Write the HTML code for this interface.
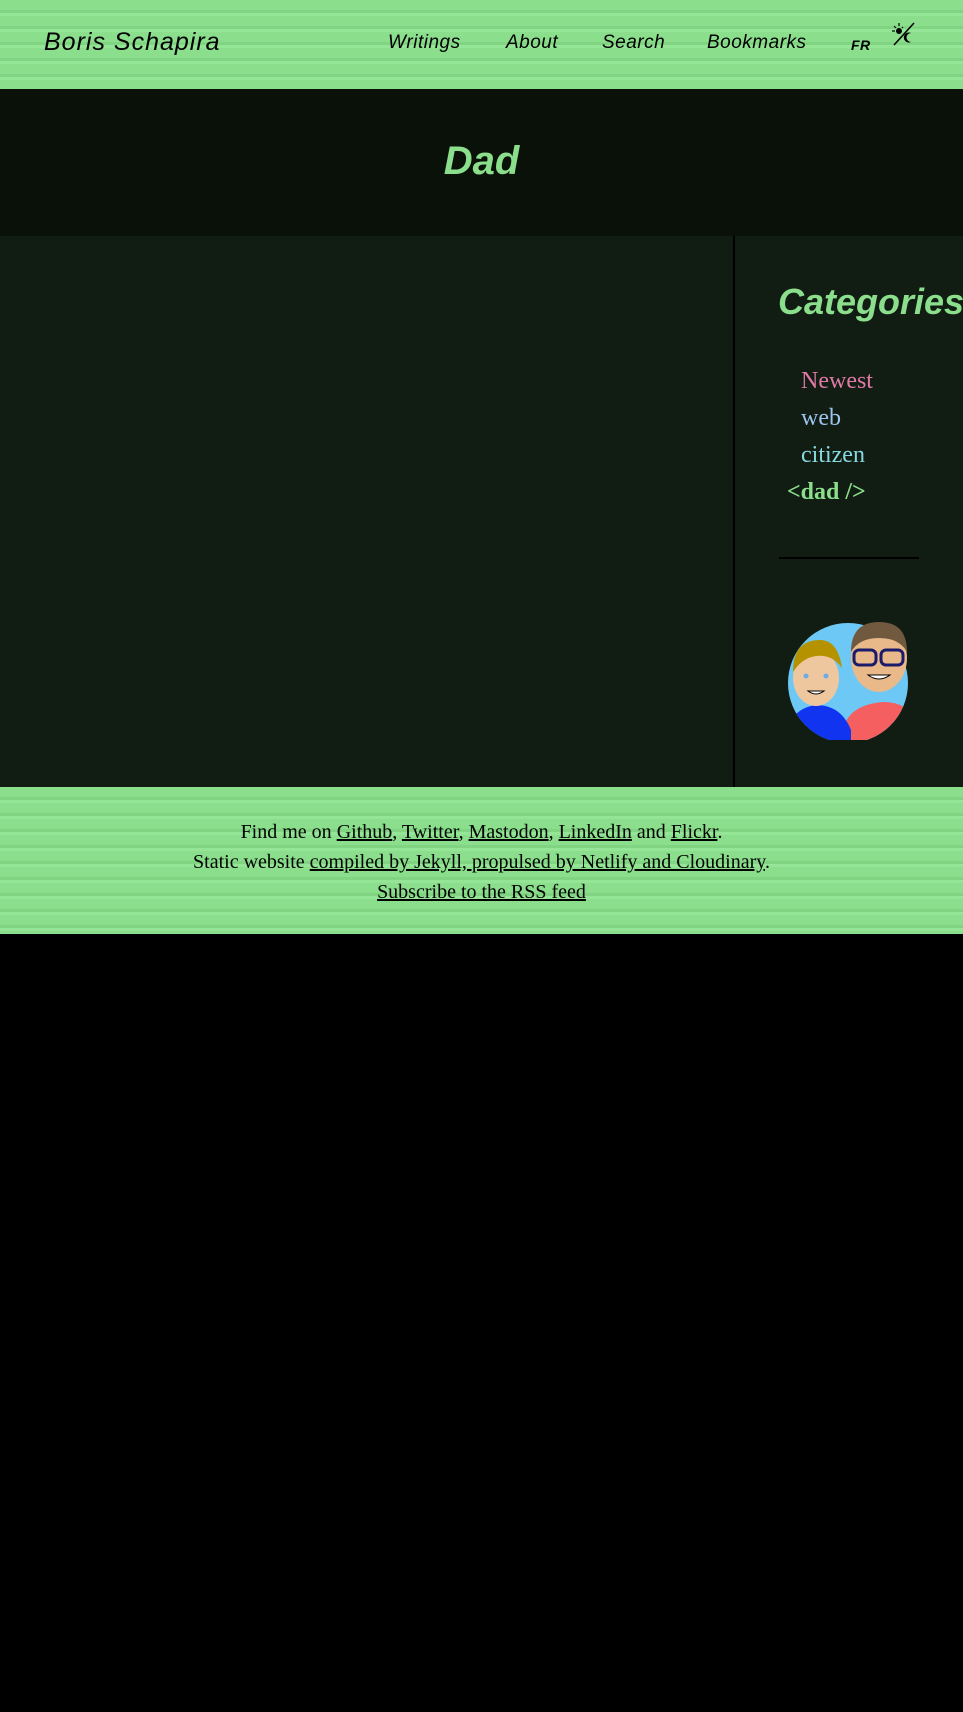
<!DOCTYPE html>
<html><head><meta charset="utf-8"><style>
*{margin:0;padding:0;box-sizing:border-box}
html,body{width:963px;height:1712px;background:#000;overflow:hidden}
body{font-family:"Liberation Serif",serif}
.pat{background-color:#8ade8c;background-image:repeating-linear-gradient(180deg,#8ade8c 0 10px,#80d482 10px 13px,#94e696 13px 16px)}
header{height:89px;position:relative;color:#000;font-family:"Liberation Sans",sans-serif;font-style:italic}
header .logo{position:absolute;left:44px;top:28px;font-size:25px;letter-spacing:1px}
header nav a{position:absolute;top:32px;font-size:19px;letter-spacing:.5px}
.hero{background:#0a1109;height:147px;text-align:center}
.hero h1{color:#8ade8c;font-family:"Liberation Sans",sans-serif;font-style:italic;font-weight:bold;font-size:40px;position:absolute;left:0;width:963px;line-height:46px;top:138px}
.main{background:#111c12;height:551px;position:relative}
.main .div{position:absolute;left:733px;top:0;width:2px;height:551px;background:#000}
.cat{position:absolute;left:778px;top:45px;color:#8ade8c;font-family:"Liberation Sans",sans-serif;font-style:italic;font-weight:bold;font-size:36px;white-space:nowrap}
.li{position:absolute;font-size:24px}
.hr{position:absolute;left:779px;top:321px;width:140px;height:2px;background:#000}
footer{height:147px;text-align:center;font-size:20px;line-height:30px;padding-top:30px;color:#000}
footer a{color:#000;text-decoration:underline}
</style></head><body>
<header class="pat">
<div class="logo">Boris Schapira</div>
<nav><a style="left:388px">Writings</a><a style="left:506px">About</a><a style="left:602px">Search</a><a style="left:707px">Bookmarks</a><a style="left:851px;top:37px;font-size:14px;font-weight:bold">FR</a></nav>
<svg style="position:absolute;left:890px;top:21px" width="26" height="26" viewBox="0 0 26 26"><line x1="4" y1="24" x2="24" y2="2" stroke="#000" stroke-width="1.5"/><circle cx="9" cy="10" r="3" fill="#000"/><g stroke="#000" stroke-width="1.2"><line x1="9" y1="2" x2="9" y2="5"/><line x1="2" y1="10" x2="5" y2="10"/><line x1="4" y1="5" x2="6" y2="7"/><line x1="13" y1="6" x2="12" y2="7"/></g><path d="M21 12a5 5 0 1 0 0 9a4 4 0 0 1 0-9z" fill="#000"/></svg>
</header>
<div class="hero"><h1>Dad</h1></div>
<div class="main">
<div class="div"></div>
<div class="cat">Categories</div>
<div class="li" style="left:801px;top:132px;color:#e07aa8">Newest</div>
<div class="li" style="left:801px;top:169px;color:#9ec5ee">web</div>
<div class="li" style="left:801px;top:206px;color:#86d9e0">citizen</div>
<div class="li" style="left:787px;top:243px;color:#8ade8c;font-weight:bold">&lt;dad /&gt;</div>
<div class="hr"></div>
<svg style="position:absolute;left:788px;top:384px" width="120" height="120" viewBox="0 0 120 120">
<defs><clipPath id="c"><circle cx="60" cy="63" r="60"/></clipPath></defs>
<circle cx="60" cy="63" r="60" fill="#6dc8f5"/>
<g clip-path="url(#c)">
<path d="M55 110 q5-25 40-28 q30 0 35 28 v20 h-75z" fill="#f55f5f"/>
<path d="M0 110 q5-22 28-25 q25 0 35 25 v20 h-63z" fill="#1034f0"/>
</g>
<ellipse cx="91" cy="38" rx="28" ry="34" fill="#e9b98a"/>
<path d="M63 32 q0-30 28-30 q28 0 28 30 q-8-14-28-14 q-20 0-28 14z" fill="#71593f"/>
<rect x="66" y="30" width="22" height="15" rx="5" fill="none" stroke="#1b1b6b" stroke-width="3"/>
<rect x="93" y="30" width="22" height="15" rx="5" fill="none" stroke="#1b1b6b" stroke-width="3"/>
<path d="M80 55 q11 8 22 0z" fill="#fff" stroke="#000"/>
<ellipse cx="28" cy="58" rx="23" ry="28" fill="#efc79f"/>
<path d="M5 52 q0-32 27-32 q18 0 22 28 q-10-14-26-12 q-14 2-23 16z" fill="#b59300"/>
<circle cx="18" cy="56" r="2.5" fill="#6ea9e8"/><circle cx="38" cy="56" r="2.5" fill="#6ea9e8"/>
<path d="M20 71 q8 6 16 0z" fill="#fff" stroke="#000"/>
</svg>
</div>
<footer class="pat">
Find me on <a>Github</a>, <a>Twitter</a>, <a>Mastodon</a>, <a>LinkedIn</a> and <a>Flickr</a>.<br>
Static website <a>compiled by Jekyll, propulsed by Netlify and Cloudinary</a>.<br>
<a>Subscribe to the RSS feed</a>
</footer>
</body></html>
